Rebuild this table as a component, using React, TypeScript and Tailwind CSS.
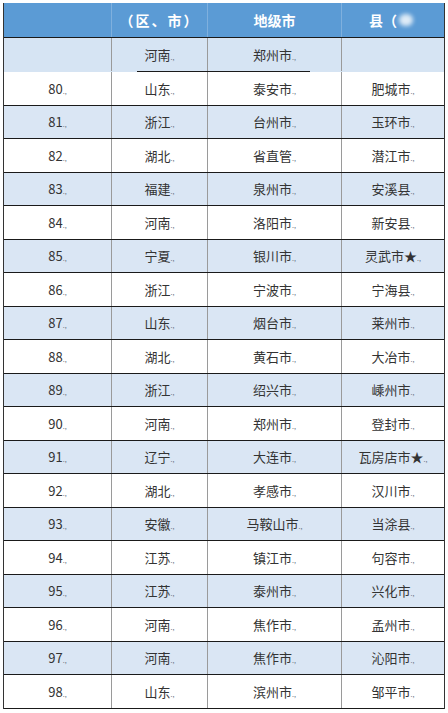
const font = { fontFamily: '"Noto Sans CJK SC", "Liberation Sans", sans-serif' };

type Row = [string, string, string, string];

const rows: Row[] = [
  ['80', '山东', '泰安市', '肥城市'],
  ['81', '浙江', '台州市', '玉环市'],
  ['82', '湖北', '省直管', '潜江市'],
  ['83', '福建', '泉州市', '安溪县'],
  ['84', '河南', '洛阳市', '新安县'],
  ['85', '宁夏', '银川市', '灵武市★'],
  ['86', '浙江', '宁波市', '宁海县'],
  ['87', '山东', '烟台市', '莱州市'],
  ['88', '湖北', '黄石市', '大冶市'],
  ['89', '浙江', '绍兴市', '嵊州市'],
  ['90', '河南', '郑州市', '登封市'],
  ['91', '辽宁', '大连市', '瓦房店市★'],
  ['92', '湖北', '孝感市', '汉川市'],
  ['93', '安徽', '马鞍山市', '当涂县'],
  ['94', '江苏', '镇江市', '句容市'],
  ['95', '江苏', '泰州市', '兴化市'],
  ['96', '河南', '焦作市', '孟州市'],
  ['97', '河南', '焦作市', '沁阳市'],
  ['98', '山东', '滨州市', '邹平市'],
];

const Mark = () => <span className="text-[7px] text-gray-500 align-baseline">.,</span>;

const Cell = ({ text, w, last }: { text: string; w: string; last?: boolean }) => (
  <div className={`${w} h-full flex items-center justify-center ${last ? '' : 'border-r border-[#9a9a9a]'}`}>
    {text && (
      <span>
        {text}
        <Mark />
      </span>
    )}
  </div>
);

export default function App() {
  return (
    <div className="w-[448px] h-[713px] bg-white overflow-hidden pt-[3px] text-[13px] text-[#333]" style={font}>
      <div className="ml-[3px] w-[442px] border-l border-r border-[#333]">
        {/* header */}
        <div className="flex h-[35px] bg-[#5b9bd5] text-white font-bold text-[14px] border-b border-[#1a1a1a]">
          <div className="w-[108px] h-full border-r border-[#7fb0de]" />
          <div className="w-[96px] h-full border-r border-[#7fb0de] flex items-center justify-center tracking-[2px]">（区、市）</div>
          <div className="w-[134px] h-full border-r border-[#7fb0de] flex items-center justify-center">地级市</div>
          <div className="flex-1 h-full flex items-center pl-[27px] gap-[2px]">
            <span>县（</span>
            <span className="w-[14px] h-[12px] rounded-full bg-white/80 blur-[2px]" />
          </div>
        </div>
        {/* first row */}
        <div className="flex h-[33px] bg-[#d6e4f3]">
          <Cell text="" w="w-[108px]" />
          <Cell text="河南" w="w-[96px]" />
          <Cell text="郑州市" w="w-[134px]" />
          <Cell text="" w="flex-1" last />
        </div>
        <div className="flex h-px bg-[#d6e4f3]">
          <div className="w-[133px]" />
          <div className="w-[173px] bg-[#1a1a1a]" />
        </div>
        {rows.map((r, i) => (
          <div
            key={r[0]}
            className={`flex h-[33.5px] border-b border-[#1a1a1a] ${i % 2 === 1 ? 'bg-[#dae6f4]' : 'bg-white'}`}
          >
            <Cell text={r[0]} w="w-[108px]" />
            <Cell text={r[1]} w="w-[96px]" />
            <Cell text={r[2]} w="w-[134px]" />
            <Cell text={r[3]} w="flex-1" last />
          </div>
        ))}
      </div>
    </div>
  );
}
